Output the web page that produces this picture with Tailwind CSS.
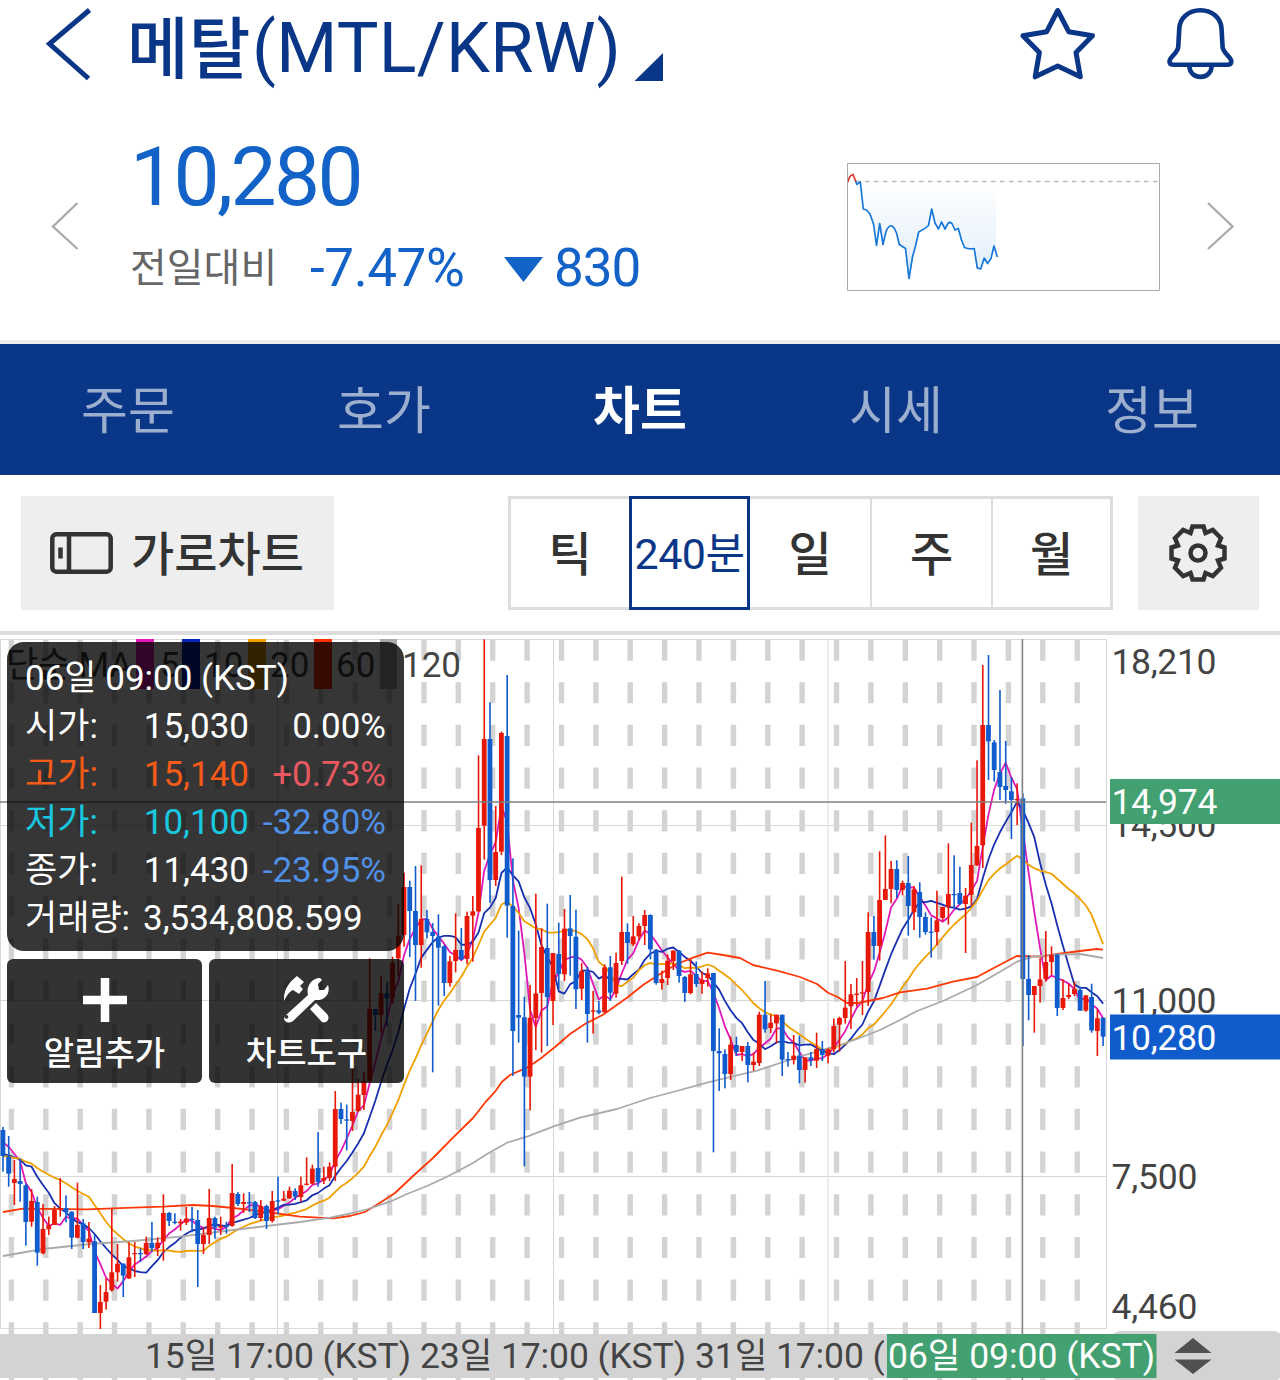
<!DOCTYPE html>
<html lang="ko">
<head>
<meta charset="utf-8">
<title>메탈(MTL/KRW)</title>
<script src="https://cdn.jsdelivr.net/npm/@tailwindcss/browser@4"></script>
</head>
<body class="bg-white">
<div class="flex h-[1380px] w-[1280px] flex-col overflow-hidden bg-white font-['Roboto','Noto_Sans_CJK_KR',sans-serif] whitespace-nowrap">

  <!-- Title bar -->
  <header class="flex h-[96px] shrink-0 items-start pl-[44px] text-[#0a3687]">
    <svg class="mt-[4px] h-[80px] w-[50px] shrink-0" viewBox="44 4 50 80" fill="none" stroke="currentColor" stroke-width="5"><path d="M89.5 10 49.500 43.800 88.500 78.500"/></svg>
    <h1 class="ml-[33px] flex h-[96px] w-[505px] items-start text-[70px] leading-[96px]"><span class="mt-[2px] w-[125px] text-[67px] font-medium">메탈</span><span class="tracking-[0.300px]">(MTL/KRW)</span></h1>
    <svg class="mt-[53px] h-[28px] w-[32px] shrink-0" viewBox="632 53 32 28" fill="currentColor"><path d="M663 53V81H634.500Z"/></svg>
    <svg class="ml-[352px] mt-[4px] h-[80px] w-[84px] shrink-0" viewBox="1016 4 84 80" fill="none" stroke="currentColor" stroke-width="5" stroke-linejoin="round"><path d="M1057.700 10.500 1068.700 31.700 1092.500 35.700 1076 52.500 1080.300 76.800 1057.700 66 1035.200 76.800 1039.400 52.500 1022.900 35.700 1046.700 31.700Z"/></svg>
    <svg class="ml-[62px] mt-[4px] h-[80px] w-[76px] shrink-0" viewBox="1162 4 76 80" fill="none" stroke="currentColor" stroke-width="4.600" stroke-linejoin="round"><path d="M1200.400 10.300C1187.500 10.300 1180 19 1179.300 28L1178.300 46C1178.300 53.500 1169.500 56.500 1169.500 61.500Q1169.500 64.700 1174 64.700H1227Q1231.300 64.700 1231.300 61.500C1231.300 56.500 1222.500 53.500 1222.500 46L1221.500 28C1220.800 19 1213.300 10.300 1200.400 10.300Z"/><path d="M1189.300 66C1189.800 80.500 1211.200 80.500 1211.700 66"/></svg>
  </header>

  <!-- Price summary -->
  <section class="flex h-[244px] shrink-0 items-start">
    <svg class="ml-[48px] mt-[104px] h-[52px] w-[32px]" viewBox="48 200 32 52" fill="none" stroke="#aaa" stroke-width="2.300"><path d="M77.500 203 53 226.500 77.500 249"/></svg>
    <div class="ml-[50px] mt-[31px] w-[717px] text-[#1262c8]">
      <div class="h-[100px] text-[82px] leading-[100px] tracking-[-2.600px]">10,280</div>
      <div class="flex h-[84px] items-center">
        <span class="w-[180px] text-[40px] text-[#666]">전일대비</span>
        <span class="w-[194px] text-[53px] tracking-[-0.400px]">-7.47%</span>
        <svg class="h-[25px] w-[39px]" viewBox="0 0 39 25" fill="currentColor"><path d="M0 0H39L19.500 25Z"/></svg>
        <span class="ml-[11px] text-[53px] tracking-[-1px]">830</span>
      </div>
    </div>
    <svg class="mt-[66px] h-[130px] w-[314px]" viewBox="847 162 314 130" fill="none">
      <defs><linearGradient id="area" x1="0" y1="182" x2="0" y2="275" gradientUnits="userSpaceOnUse"><stop offset="0" stop-color="#1878d8" stop-opacity="0"/><stop offset="1" stop-color="#1878d8" stop-opacity=".13"/></linearGradient></defs>
      <path fill="url(#area)" d="M860 182 863.300 209 867 210 871 216 873.500 224 876.500 245 880 224 883 244 886 231 890 226 893 227 897 234 899 244 905.500 248 909 278 912.500 257 918.500 232 928.500 225 931.700 209 935 223 938.500 229 941.500 222 945 229 949 222 952 223 955 230 958 228 961 239 964.500 247 974 248 977.500 268 980.500 269 984 258 987.500 263 991 258 994 246 996 250V182Z"/>
      <path stroke="#bbb" stroke-width="1.400" stroke-dasharray="4.500 4.500" d="M856 181.500H1159"/>
      <path stroke="#1878d8" stroke-width="1.700" stroke-linejoin="round" d="M855.500 181 857 184.500 858.500 183 860.300 182 863.300 209 866.500 210 870 214 873.500 224 876.500 245.500 879.700 223.500 883 244.500 886 231.500Q890 222 894.500 228.500L896.500 233 899.300 244.500 905.500 248.500 909 278.500 912.500 257 915.500 246 918.700 232Q925 229 928.500 225.500L931.700 209 935 223 938.500 229 941.500 222 945 229 948 223.500Q950 221.500 952 223.500L955 230 958.300 228.500 961.500 240 964.500 247.500Q969 249.500 974.200 248.500L977.300 268 980.700 269 984.200 258 987.500 263.500 991 258.500 994 246 997.300 257"/>
      <path stroke="#d83830" stroke-width="1.700" d="M848 182Q849 175.500 853 174.500L855.800 181.500"/>
      <path stroke="#aaa" d="M847.500 163.500H1159.500V290.500H847.500Z"/>
    </svg>
    <svg class="ml-[45px] mt-[104px] h-[52px] w-[30px]" viewBox="1206 200 30 52" fill="none" stroke="#aaa" stroke-width="2.300"><path d="M1208 203 1232.500 226.500 1208 249"/></svg>
  </section>

  <!-- Tabs -->
  <nav class="grid h-[135px] shrink-0 grid-cols-5 items-center border-t-[4px] border-[#eee] bg-[#0a3687] pt-[5px] text-center text-[51px] text-[#9dafcf]">
    <span>주문</span><span>호가</span><span class="font-bold text-white">차트</span><span>시세</span><span>정보</span>
  </nav>

  <!-- Chart toolbar -->
  <div class="flex h-[160px] shrink-0 items-start border-b-[4px] border-[#ddd] pt-[21px] pl-[21px] text-[#333]">
    <button class="flex h-[114px] w-[313px] items-center bg-[#eee] pl-[29px] text-[47px] font-medium">
      <svg class="h-[42px] w-[63px]" viewBox="0 0 63 42" fill="none" stroke="currentColor" stroke-width="4.500"><rect x="2.300" y="2.300" width="58.400" height="37.400" rx="4"/><path d="M19 2V40M10.500 15.500V26.500"/></svg>
      <span class="mt-[4px] ml-[18px]">가로차트</span>
    </button>
    <div class="ml-[174px] flex h-[114px] w-[605px] border-[3px] border-[#ddd] text-center text-[47px] leading-[112px] font-medium">
      <span class="w-[118px]">틱</span>
      <span class="-my-[3px] h-[114px] w-[121px] border-[3px] border-[#0a3687] text-[43px] leading-[110px] font-normal tracking-[-0.500px] text-[#0a3687]">240분</span>
      <span class="h-[108px] w-[122px] border-r-2 border-[#ddd]">일</span>
      <span class="h-[108px] w-[121px] border-r-2 border-[#ddd]">주</span>
      <span class="w-[117px]">월</span>
    </div>
    <button class="ml-[25px] flex h-[114px] w-[121px] items-center justify-center bg-[#eee] pr-[2px]">
      <svg class="h-[60px] w-[60px]" viewBox="-30 -30 60 60" fill="none" stroke="currentColor" stroke-width="4.500"><path d="M-5.500-26.500H5.500L7.500-20 14.800-23 23-14.800 20-7.500 26.500-5.500V5.500L20 7.500 23 14.800 14.800 23 7.500 20 5.500 26.500H-5.500L-7.500 20-14.800 23-23 14.800-20 7.500-26.500 5.500V-5.500L-20-7.500-23-14.800-14.800-23-7.500-20Z"/><circle r="7.500"/></svg>
    </button>
  </div>

  <!-- Candle chart -->
  <main class="relative h-[745px] shrink-0">
    <svg class="block h-[745px] w-[1280px]" viewBox="0 635 1280 745">
      <g id="dashes" stroke="#d3d3d3" stroke-width="5.400" stroke-dasharray="21.200 21.470"></g>
      <path fill="none" stroke="#d8d8d8" d="M0 639.500H1106.500V1328.500H0M.5 639V1329M0 825.500H1106M0 1000.500H1106M0 1176.500H1106M277.500 639V1334M553.500 639V1334M828 639V1334"/>
      <g font-size="35" fill="#444">
        <text x="6" y="677" textLength="126">단순 MA</text>
        <path fill="#e018b8" d="M136 639h18v50h-18z"/><text x="160" y="676.500">5</text>
        <path fill="#0828b8" d="M182 639h18v50h-18z"/><text x="204" y="676.500">10</text>
        <path fill="#f0a000" d="M248 639h18v50h-18z"/><text x="270" y="676.500">20</text>
        <path fill="#ff3000" d="M314 639h18v50h-18z"/><text x="336" y="676.500">60</text>
        <path fill="#a8a8a8" d="M380 639h17v50h-17z"/><text x="402" y="676.500">120</text>
      </g>
      <g id="averages" fill="none" stroke-width="1.800" stroke-linejoin="round"></g>
      <g id="candles"></g>
      <rect y="1334" width="1120" height="44" fill="#d3d3d3"/>
      <rect x="1108" y="1331" width="178" height="50" rx="14" fill="#d3d3d3"/>
      <path stroke="#808080" stroke-width="1.600" d="M0 802H1106M1022.400 639V1380"/>
      <g font-size="35.500" fill="#444">
        <text x="145" y="1368" textLength="266">15일 17:00 (KST)</text>
        <text x="420" y="1368" textLength="266">23일 17:00 (KST)</text>
        <text x="695" y="1368" textLength="266">31일 17:00 (KST)</text>
        <text x="1111.500" y="673.700" textLength="105">18,210</text>
        <text x="1111.500" y="837" textLength="105">14,500</text>
        <text x="1111.500" y="1012.500" textLength="105">11,000</text>
        <text x="1111.500" y="1188.500" textLength="86">7,500</text>
        <text x="1111.500" y="1318.500" textLength="86">4,460</text>
      </g>
      <path fill="#43a070" d="M1110 779h170v45h-170zM887 1334h269.500v44H887z"/>
      <path fill="#115ccc" d="M1110 1014.500h170v45h-170z"/>
      <g font-size="35.500" fill="#fff">
        <text x="1111.500" y="813.700" textLength="106">14,974</text>
        <text x="1111.500" y="1049.500" textLength="105">10,280</text>
        <text x="888" y="1368" textLength="267">06일 09:00 (KST)</text>
      </g>
      <path fill="#505050" d="M1174.500 1353 1193 1338 1211.500 1353ZM1174.500 1359.500H1211.500L1193 1374Z"/>
    </svg>

    <!-- Crosshair details -->
    <div class="absolute top-[7px] left-[7px] flex h-[309px] w-[397px] flex-col rounded-[17px] bg-black/79 pt-[13px] pr-[18px] pl-[18px] text-[35px] leading-[48px] text-white">
      <div>06일 09:00 (KST)</div>
      <div class="flex justify-between"><span class="w-[88px]">시가:</span><span class="w-[136px] text-right">15,030</span><span class="w-[137px] text-right">0.00%</span></div>
      <div class="flex justify-between text-[#f85a18]"><span class="w-[88px]">고가:</span><span class="w-[136px] text-right">15,140</span><span class="w-[137px] text-right text-[#e85860]">+0.73%</span></div>
      <div class="flex justify-between text-[#18c8e0]"><span class="w-[88px]">저가:</span><span class="w-[136px] text-right">10,100</span><span class="w-[137px] text-right text-[#5090e8]">-32.80%</span></div>
      <div class="flex justify-between"><span class="w-[88px]">종가:</span><span class="w-[136px] text-right">11,430</span><span class="w-[137px] text-right text-[#5090e8]">-23.95%</span></div>
      <div class="flex"><span class="w-[118px]">거래량:</span><span>3,534,808.599</span></div>
    </div>

    <!-- Chart actions -->
    <div class="absolute top-[323.500px] left-[7px] flex h-[124.500px] w-[397px] gap-[7px] text-[33px] font-medium text-white">
      <button class="flex flex-1 flex-col items-center rounded-[6px] bg-black/80 pt-[18px]">
        <svg class="h-[46px] w-[46px]" viewBox="0 0 46 46" stroke="#fff" stroke-width="8.500" stroke-linecap="butt"><path d="M23 1V45M1 23H45"/></svg>
        <span class="mt-[7px] leading-[48px]">알림추가</span>
      </button>
      <button class="flex flex-1 flex-col items-center rounded-[6px] bg-black/80 pt-[16px]">
        <svg class="h-[48px] w-[48px]" viewBox="0 0 48 48" fill="#fff"><path d="M1 24C1 16 4 9 14 1L21 7 17 11 20 14 16 19 10 15C6 17 4 20 1 26Z"/><path fill-rule="evenodd" d="M2 41 25 20C23 12 28 3 37 3L39 5 35 9 36 15 41 15 45 10C48 19 41 26 32 25L10 46C4 50-1 45 2 41ZM5.300 41.800A1.800 1.800 0 1 0 5.300 41.900Z"/><path d="M27 34 33 28 44 39C48 44 43 49 39 47Z"/></svg>
        <span class="mt-[7px] leading-[48px]">차트도구</span>
      </button>
    </div>
  </main>
</div>

<script>
  const NS = 'http://www.w3.org/2000/svg';
  const STEP = 5.73, START = 2.9;
  // Each block: [vertical origin, "direction high bodyTop bodyBottom low" ...], in thirds of a pixel.
  const blocks = [
    [1080, 'b141 150 228 275,b168 230 281 320,r240 297 309 375,b235 303 312 365,b310 316 426 497,r327 363 425 440,b350 366 518 557,r372 447 520 523,r410 435 448 465,r378 390 435 435,r294 384 386 410,b346 384 396 427,b394 395 473 507,r308 435 473 475,b417 430 486 507,r426 476 487 504,b465 484 699 699,r615 666 699 747,r595 636 665 689,r387 577 631 635,r492 551 577 605,b550 551 587 651,r487 532 595 597,r486 519 521 591,b505 519 522 546,r470 489 522 525,b426 489 504 515,r472 488 504 528,r343 399 484 542,b396 399 423 438,b400 425 429 433,r417 425 430 452,r381 416 428 435,b381 416 419 457,b390 420 492 621,r443 465 492 522,r327 414 465 492,b410 414 443 476,r410 438 443 465,b425 436 440 461,r252 339 438 440,b336 342 372 378,r340 366 372 399,b336 366 370 396,b363 366 414 417,r360 378 414 423,b374 378 423 447,r333 363 423 428,b290 361 365 402,r333 356 362 363,r320 332 355 357,b325 333 350 360'],
    [1000, 'r530 556 591 605,r472 551 554 556,r494 506 551 554,b396 504 546 560,r500 534 542 552,r487 500 534 543,r273 327 500 543,b308 327 357 372,b314 358 362 451,r205 336 363 393,r237 284 333 336,r215 243 285 330'],
    [630, 'r985 1137 1353 1355,b1137 1137 1155 1203,r1037 1090 1155 1208,b1057 1090 1105 1187,r980 998 1105 1122'],
    [635, 'r806 902 970 1022,r713 756 900 935,b737 756 828 966,b693 828 930 1098,r691 852 930 998,b825 852 892 910,b864 891 903 1312,b838 905 938 1112,b930 934 1044 1083,r963 979 1044 1055,r835 945 978 1012,b879 945 973 975,r830 843 972 988,r783 829 842 980,r361 579 829 831,r13 312 572 674,b202 312 735 804,r513 651 735 753,r290 294 650 660,b120 303 812 908,b670 813 1188 1323,b887 1140 1148 1223,b1085 1147 1325 1594,r1050 1148 1325 1426,r776 1075 1149 1245,r880 936 1074 1253,b806 939 1086 1233,r954 954 1098 1170,b863 957 1017 1062,r822 881 1018 1038,b780 880 903 1022,b824 905 1063 1122,r984 1008 1061 1095'],
    [850, 'b350 365 492 578,r423 481 485 551,b453 481 488 493,r343 352 487 488,b318 352 428 453,r308 339 431 443,r80 246 333 345,b220 246 279 341,r198 259 283 288,r220 228 259 270,r180 195 228 285,b193 195 298 328,b297 299 399 404,r362 387 399 419,r313 332 384 405,r300 302 333 360,b300 302 378 398,b378 381 429 456,r327 373 429 433,b334 372 402 411,r364 389 402 431,r355 370 384 410,b369 369 603 907,b535 603 610 723,b598 612 672 715,r560 584 672 690,b560 585 606 618,r588 588 606 633,b576 588 645 697,r608 635 645 662,r485 494 639 648,b393 494 538 548,r493 518 534 549,r494 494 520 580,b494 494 629 678,b606 627 630 650,r555 617 630 643,b557 617 660 700,r622 622 660 698,b606 622 630 648,r548 597 632 654,b573 597 615 633,r595 598 617 640,r506 528 598 608,r500 504 524 605,r333 473 504 521,r402 433 469 537'],
    [640, 'r1014 1061 1065 1100,r963 1057 1061 1125,r817 876 1056 1098,b828 876 918 959,r634 780 918 962,r586 747 780 780,r663 687 747 790,b661 687 750 774,r722 729 750 766,b648 729 798 887,r738 748 817 870,b727 756 831 893,b817 831 876 884,b832 875 878 953,r752 841 876 916,r800 801 834 844,r610 762 801 854,b646 762 765 805,b680 759 792 796,r744 767 792 939,r548 675 765 798,r361 618 676 678,r75 255 616 684,b45 255 304 420,b300 307 390 425,b150 396 441 480,b303 438 450 491,b411 454 480 597,r430 477 480 555,b460 475 1017 1218,b945 1017 1065 1141,r1038 1038 1065 1178,r955 1018 1038 1088,r873 966 1017 1025,r919 945 966 1005,b942 944 1104 1128,r1018 1074 1104 1110,r1032 1065 1071 1077,r1025 1047 1062 1068,b1040 1050 1112 1112,r1065 1066 1112 1115,b1031 1071 1171 1178,r1108 1135 1173 1248,b1133 1133 1190 1218']
  ];
  const candles = blocks.flatMap(([top, rows]) => rows.split(',').map(row => {
    const [high, open, close, low] = row.slice(1).split(' ').map(v => top + v / 3);
    return { up: row[0] === 'r', high, t: open, b: close, low };
  }));
  const x = i => START + STEP * i;
  const add = (id, tag, attrs) => {
    const el = document.createElementNS(NS, tag);
    for (const k in attrs) el.setAttribute(k, attrs[k]);
    document.getElementById(id).append(el);
  };

  for (let k = 0; k < 32; k++) {
    const cx = (11.4 + 34.38 * k).toFixed(1);
    add('dashes', 'path', { d: `M${cx} 639.500V1380` });
  }

  candles.forEach((c, i) => {
    const fill = c.up ? '#e81808' : '#105ccc';
    add('candles', 'rect', { x: x(i) - 0.75, y: c.high, width: 1.6, height: c.low - c.high, fill });
    add('candles', 'rect', { x: x(i) - 2.4, y: c.t, width: 4.8, height: Math.max(1.2, c.b - c.t), fill });
  });

  // Moving averages; seed values cover the bars whose history is off screen.
  const closes = candles.map(c => c.up ? c.t : c.b);
  const average = (n, seed, stroke) => {
    const pts = closes.map((_, i) => {
      const y = i < n - 1 ? 1080 + seed[i] / 3 : closes.slice(i - n + 1, i + 1).reduce((a, b) => a + b) / n;
      return `${x(i).toFixed(1)},${y.toFixed(1)}`;
    });
    add('averages', 'polyline', { points: pts.join(' '), stroke });
  };
  average(5, [187, 200, 222, 243], '#e018b8');
  average(10, [222, 226, 232, 238, 256, 260, 290, 315, 338], '#1830b0');
  average(20, [228, 230, 234, 236, 245, 251, 264, 275, 284, 293, 300, 310, 322, 332, 342, 350, 375, 400, 425], '#f0a000');
  add('averages', 'polyline', { stroke: '#ff3808', points: '3,1212 23,1208.700 87,1209.300 133,1207.700 163,1206.700 193,1205 213,1206 233,1208 267,1212 300,1216.700 333,1218.300 350,1216 365,1212 380,1202.700 395,1193 413,1176 433,1158 453,1137.700 473,1118 485,1102.700 495,1091.700 502,1081.700 510,1075 527,1067.700 540,1059 555,1047 570,1034 585,1024 603,1014.700 627,997.700 643,985 660,974 677,964 693,957.700 707.700,952.700 723,955 740,958 753,965 777,970.700 800,977 817,984 828,992.700 838,997.300 847,1003 858,1003 883,998 900,992.300 927,988.700 953,981.700 977,977 990,970 1016.700,956 1040,956.700 1057,954 1080,951 1096.700,949 1103,949.700' });
  add('averages', 'polyline', { stroke: '#aaa', points: '3,1256 43,1249 90,1244 133,1241 180,1236.700 233,1230 300,1222 330,1217.700 353,1213 368,1209 390,1201.700 407,1194 427,1186 447,1176.700 473,1163 487,1154 507,1142.700 527,1136.700 553,1126.700 580,1117.700 617,1109 650,1098 673,1092 707,1082.700 730,1077 757,1070.700 783,1062 803,1055.700 827,1048.700 840,1045 857,1039 880,1030 900,1020 917,1011 943,1001 977,985 1000,971.700 1017,961.700 1033,956.700 1053,954.700 1080,954 1103,958' });
</script>
</body>
</html>
